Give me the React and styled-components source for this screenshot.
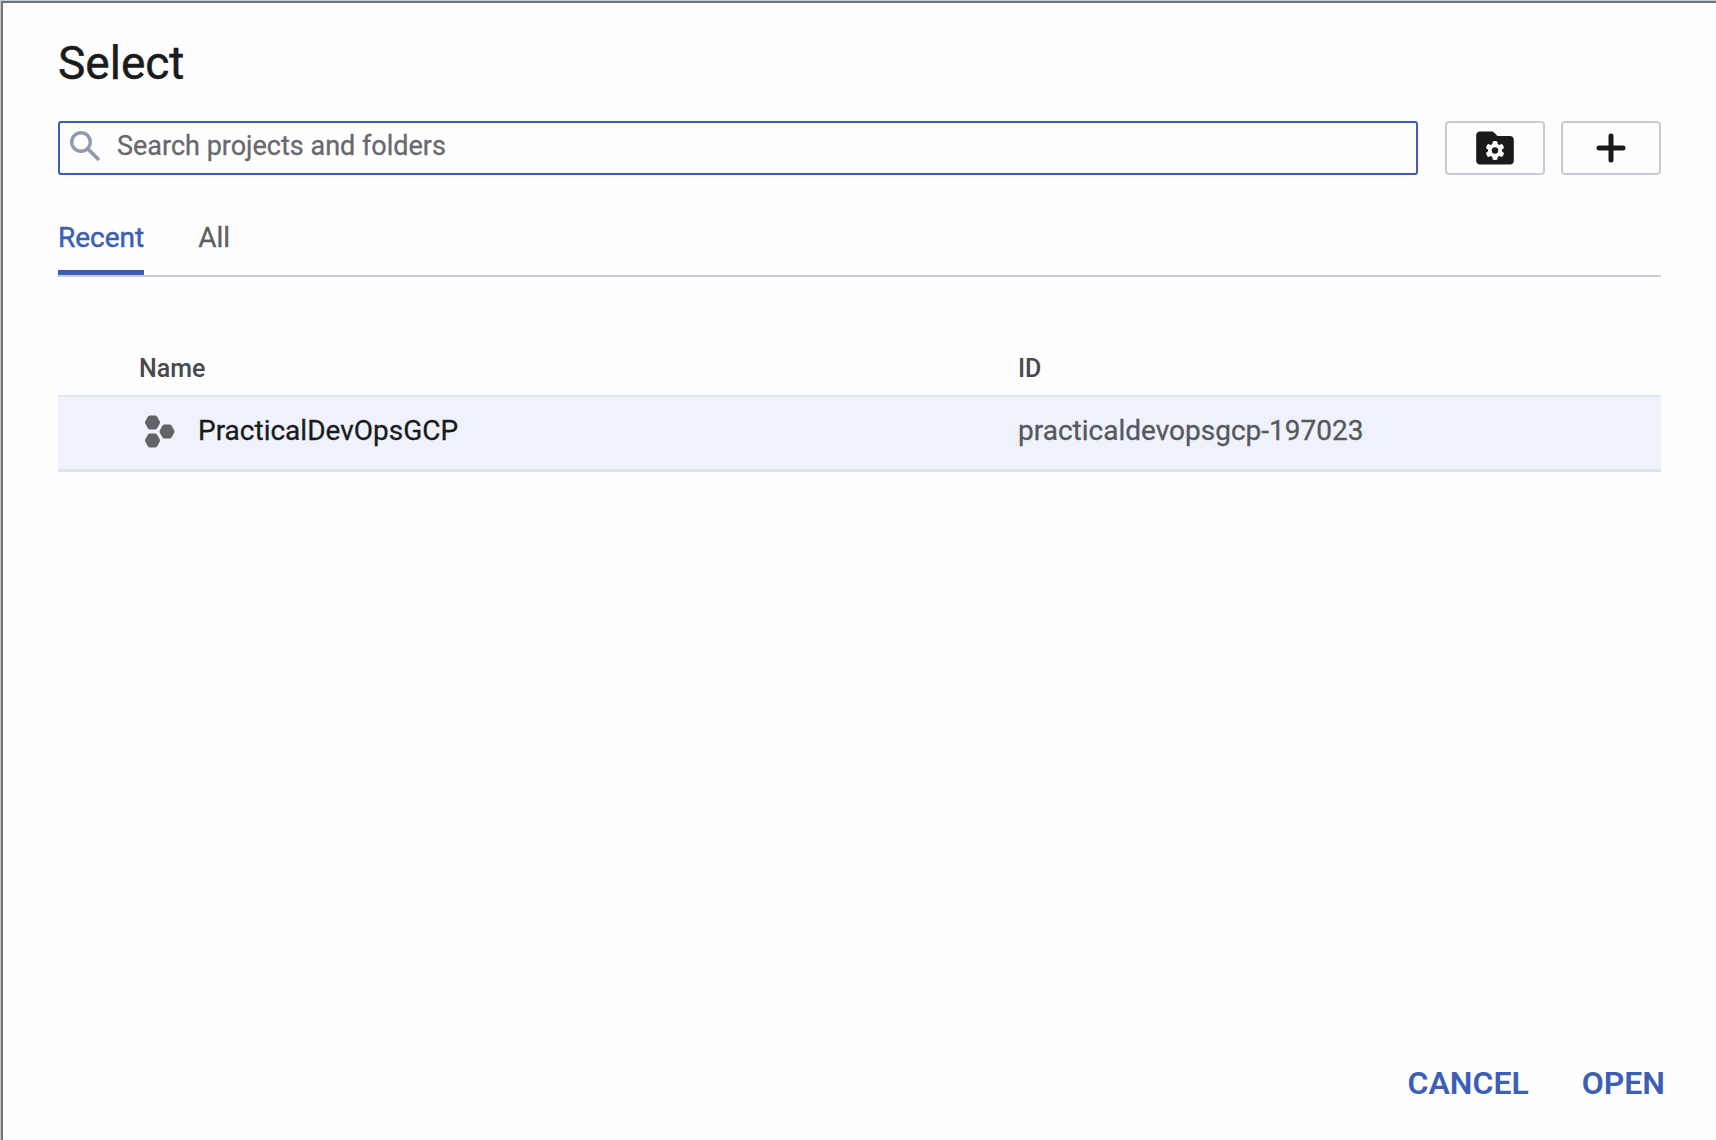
import React, { useState } from "react";
import styled, { createGlobalStyle } from "styled-components";

const GlobalStyle = createGlobalStyle`
  *, *::before, *::after { box-sizing: border-box; }
  body {
    margin: 0;
    background: #ffffff;
    font-family: Roboto, "Liberation Sans", sans-serif;
    color: #191b1d;
  }
  button, input { font-family: inherit; }
`;

const Frame = styled.div`
  display: flex;
  min-height: 100vh;
  padding: 1px 0 0 1px;
  background: #c3ccd6;
`;

const Dialog = styled.main`
  display: flex;
  flex: 1;
  flex-direction: column;
  min-width: 0;
  padding: 34px 55px 33px 55px;
  border: solid #70757a;
  border-width: 2px 0 0 2px;
  background: #fefefe;
`;

const Title = styled.h1`
  margin: 0;
  font-size: 46px;
  line-height: 52px;
  font-weight: 400;
  -webkit-text-stroke: 0.5px currentColor;
`;

const Toolbar = styled.div`
  display: flex;
  gap: 16px;
  margin-top: 32px;
`;

const SearchBox = styled.label`
  display: flex;
  flex: 1;
  align-items: center;
  gap: 16px;
  height: 54px;
  margin-right: 11px;
  padding: 0 9px 4px;
  border: 2px solid #3b5fb4;
  border-radius: 3px;
`;

const SearchInput = styled.input`
  flex: 1;
  min-width: 0;
  height: 40px;
  padding: 0;
  border: 0;
  outline: 0;
  background: transparent;
  color: #191b1d;
  font-size: 27px;
  -webkit-text-stroke: 0.3px currentColor;
  &::placeholder { color: #66696d; opacity: 1; }
`;

const IconButton = styled.button`
  display: flex;
  align-items: center;
  justify-content: center;
  width: 100px;
  height: 54px;
  padding: 0;
  border: 2px solid #c9ccd6;
  border-radius: 4px;
  background: transparent;
  color: #191b1d;
`;

const Tabs = styled.div`
  display: flex;
  gap: 54px;
  height: 78px;
  margin-top: 24px;
  border-bottom: 2px solid #c9ccd6;
`;

const Tab = styled.button`
  height: 76px;
  padding: 6px 0 0;
  border: 0;
  border-bottom: 5px solid ${(p) => (p.$active ? "#3b5fb4" : "transparent")};
  background: transparent;
  color: ${(p) => (p.$active ? "#3b5fb4" : "#5b5e62")};
  font-size: 28px;
  line-height: 32px;
  -webkit-text-stroke: ${(p) => (p.$active ? "0.5px" : "0.3px")} currentColor;
`;

const Table = styled.table`
  width: 100%;
  margin-top: 66px;
  border-collapse: separate;
  border-spacing: 0;
  table-layout: fixed;
  text-align: left;
`;

const HeadCell = styled.th`
  width: ${(p) => p.$width};
  height: 52px;
  padding: 0 0 0 ${(p) => p.$inset}px;
  color: #46494d;
  font-size: 25px;
  line-height: 28px;
  font-weight: 500;
`;

const Cell = styled.td`
  height: 77px;
  padding: 0 0 4px ${(p) => p.$inset}px;
  border-top: 2px solid #e1e5ef;
  border-bottom: 3px solid #e0e4ef;
  background: #eff2fb;
  color: ${(p) => p.$color};
  font-size: 28px;
  line-height: 32px;
  -webkit-text-stroke: 0.3px currentColor;
`;

const Project = styled.div`
  display: flex;
  align-items: center;
  gap: 22px;
`;

const Actions = styled.footer`
  display: flex;
  justify-content: flex-end;
  gap: 53px;
  margin: auto -4px 0 0;
`;

const Action = styled.button`
  padding: 0;
  border: 0;
  background: transparent;
  color: #3b5fb4;
  font-size: 32px;
  line-height: 48px;
  font-weight: 600;
`;

const SearchIcon = () => (
  <svg width="32" height="32" viewBox="0 0 32 32" fill="none" stroke="#919bae" aria-hidden="true">
    <circle cx="12" cy="12" r="9.3" strokeWidth="3.4" />
    <path d="M18.5 18.5 30 30" strokeWidth="3.8" />
  </svg>
);

const FolderIcon = () => (
  <svg width="38" height="34" viewBox="0 0 38 34" aria-hidden="true">
    <path d="M4 0.5h11.5c1.3 0 2.1.6 3 1.5l3 3H34c2.2 0 3.8 1.6 3.8 3.7v21.1c0 2.2-1.6 3.8-3.8 3.8H4c-2.2 0-3.8-1.6-3.8-3.8V4.3C.2 2.1 1.8.5 4 .5Z" fill="currentColor" />
    <g fill="#fefefe">
      <circle cx="19" cy="19.5" r="7" />
      {[0, 60, 120].map((angle) => (
        <rect key={angle} x="16.4" y="10" width="5.2" height="19" rx="1.8" transform={`rotate(${angle} 19 19.5)`} />
      ))}
    </g>
    <circle cx="19" cy="19.5" r="3.2" fill="currentColor" />
  </svg>
);

const PlusIcon = () => (
  <svg width="30" height="30" viewBox="0 0 30 30" aria-hidden="true">
    <path d="M15 3v24M3 15h24" stroke="currentColor" strokeWidth="5" strokeLinecap="round" />
  </svg>
);

const ProjectIcon = () => (
  <svg width="32" height="34" viewBox="0 0 32 34" fill="#626366" aria-hidden="true">
    {[[8.5, 8.5], [23, 17.5], [8.5, 26.5]].map(([x, y]) => (
      <path key={y} transform={`translate(${x} ${y})`} d="M-2.5-4.4h5L5 0 2.5 4.4h-5L-5 0Z" stroke="#626366" strokeWidth="5" strokeLinejoin="round" />
    ))}
  </svg>
);

const projects = [{ name: "PracticalDevOpsGCP", id: "practicaldevopsgcp-197023" }];

export default function App() {
  const [tab, setTab] = useState("Recent");
  const [query, setQuery] = useState("");
  return (
    <Frame>
      <GlobalStyle />
      <Dialog>
        <Title>Select</Title>
        <Toolbar>
          <SearchBox>
            <SearchIcon />
            <SearchInput
              aria-label="Search projects and folders"
              placeholder="Search projects and folders"
              value={query}
              onChange={(e) => setQuery(e.target.value)}
            />
          </SearchBox>
          <IconButton type="button" aria-label="Manage folders"><FolderIcon /></IconButton>
          <IconButton type="button" aria-label="New project"><PlusIcon /></IconButton>
        </Toolbar>
        <Tabs role="tablist">
          {["Recent", "All"].map((name) => (
            <Tab key={name} type="button" role="tab" aria-selected={tab === name} $active={tab === name} onClick={() => setTab(name)}>
              {name}
            </Tab>
          ))}
        </Tabs>
        <Table>
          <colgroup>
            <col width="960" />
            <col />
          </colgroup>
          <thead>
            <tr>
              <HeadCell $inset={81}>Name</HeadCell>
              <HeadCell $inset={0}>ID</HeadCell>
            </tr>
          </thead>
          <tbody>
            {projects.map((p) => (
              <tr key={p.id}>
                <Cell $inset={86} $color="#191b1d"><Project><ProjectIcon />{p.name}</Project></Cell>
                <Cell $inset={0} $color="#55585c">{p.id}</Cell>
              </tr>
            ))}
          </tbody>
        </Table>
        <Actions>
          <Action type="button">CANCEL</Action>
          <Action type="button">OPEN</Action>
        </Actions>
      </Dialog>
    </Frame>
  );
}
